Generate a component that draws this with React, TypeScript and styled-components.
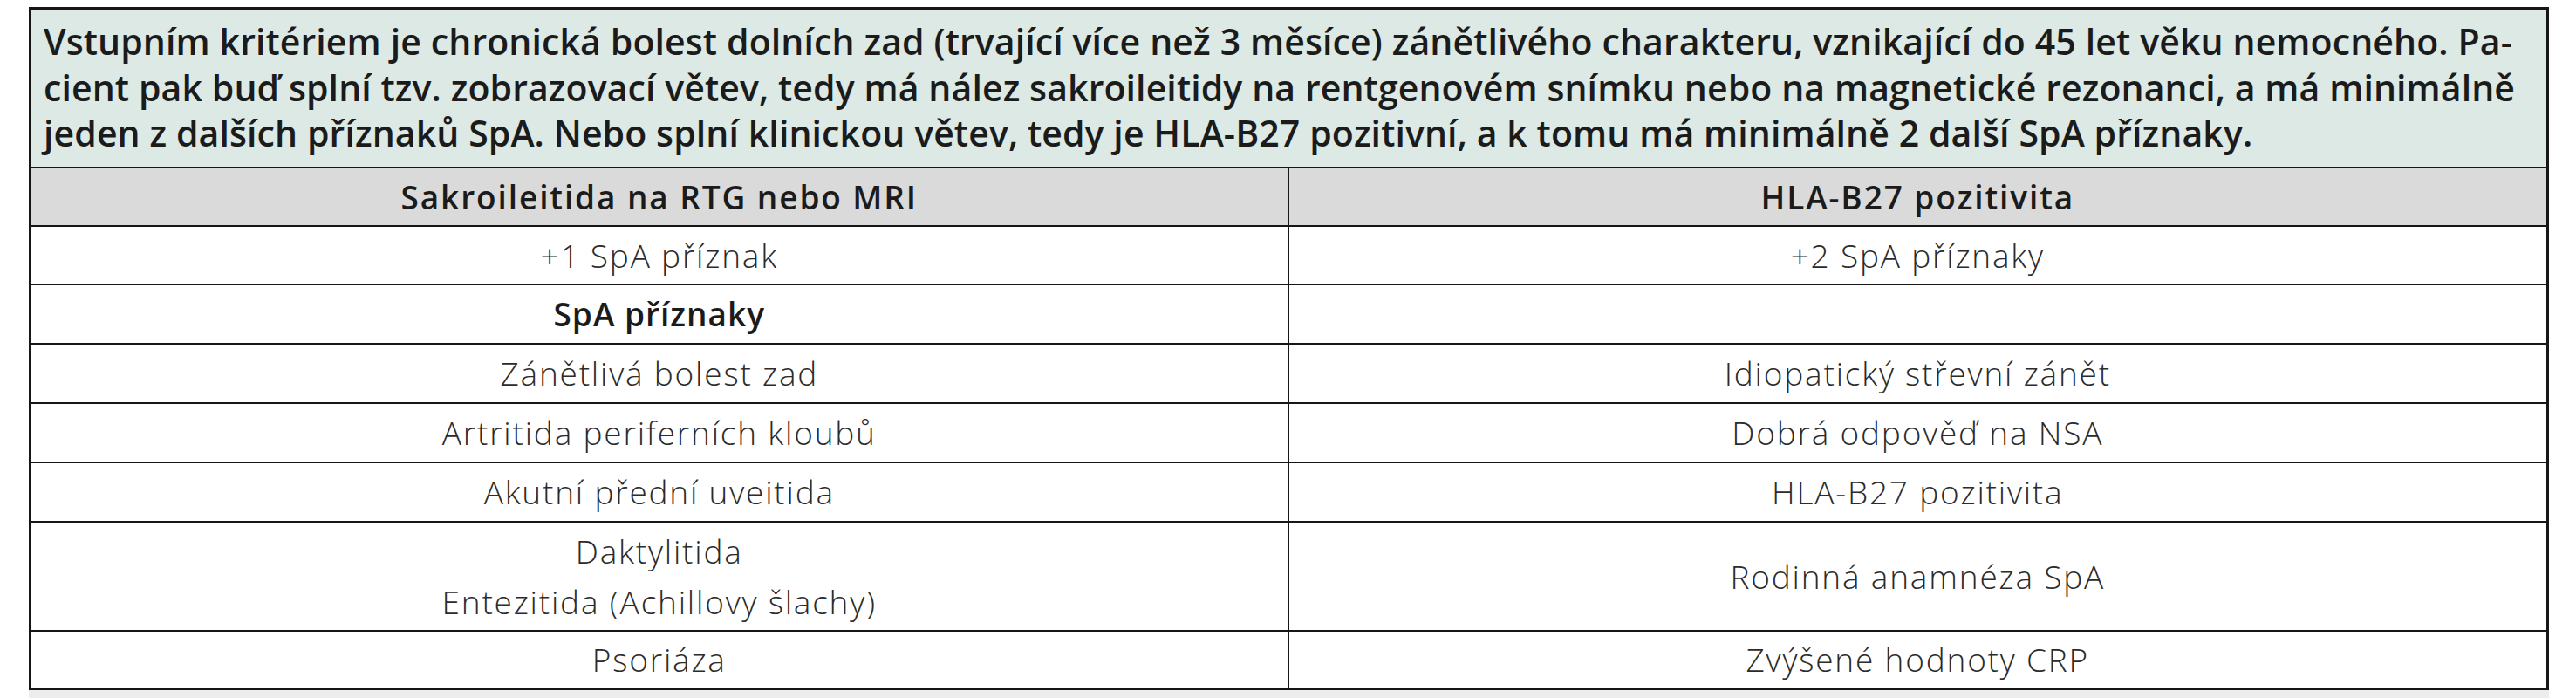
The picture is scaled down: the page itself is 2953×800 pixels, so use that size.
import React from "react";
import styled, { createGlobalStyle } from "styled-components";

const GlobalStyle = createGlobalStyle`
  html, body {
    margin: 0;
    padding: 0;
    background: #ffffff;
  }
  body {
    font-family: "Open Sans", "Noto Sans", "DejaVu Sans", sans-serif;
    color: #222222;
  }
`;

const Page = styled.div`
  width: 2953px;
  height: 800px;
  box-sizing: border-box;
  padding: 8px 31px 0 33px;
  overflow: hidden;
`;

const Table = styled.div`
  display: flex;
  flex-direction: column;
  border: 3px solid #161616;
  box-sizing: border-box;
  width: 2889px;
`;

/* green intro box over both columns */
const Intro = styled.div`
  height: 182px;
  box-sizing: border-box;
  background: #dce9e5;
  border-bottom: 2px solid #161616;
  padding: 10px 39px 0 14px;
  font-weight: 600;
  font-size: 41px;
  letter-spacing: 0.1px;
  line-height: 52.5px;
  color: #1b1b1b;
`;

const Line = styled.div<{ $justify?: boolean }>`
  white-space: nowrap;
  text-align: ${(p) => (p.$justify ? "justify" : "left")};
  text-align-last: ${(p) => (p.$justify ? "justify" : "left")};
`;

const Row = styled.div<{ $height: number; $head?: boolean; $last?: boolean }>`
  display: grid;
  grid-template-columns: 1fr 1fr;
  height: ${(p) => p.$height}px;
  box-sizing: border-box;
  background: ${(p) => (p.$head ? "#dadada" : "#ffffff")};
  border-bottom: ${(p) => (p.$last ? "none" : "2px solid #161616")};
`;

const Cell = styled.div<{ $bold?: boolean; $head?: boolean }>`
  display: flex;
  flex-direction: column;
  align-items: center;
  justify-content: center;
  text-align: center;
  font-size: 37px;
  line-height: 58px;
  letter-spacing: ${(p) => (p.$head ? "1.9px" : p.$bold ? "1px" : "1.8px")};
  font-weight: ${(p) => (p.$bold ? 600 : 300)};
  color: ${(p) => (p.$bold ? "#1b1b1b" : "#2b2b2b")};

  &:first-child {
    border-right: 2px solid #161616;
  }
`;

const Shade = styled.div`
  height: 9px;
  background: #ededed;
`;

type RowData = {
  left: React.ReactNode;
  right: React.ReactNode;
  height: number;
  head?: boolean;
  boldLeft?: boolean;
};

const rows: RowData[] = [
  { left: "Sakroileitida na RTG nebo MRI", right: "HLA-B27 pozitivita", height: 67, head: true },
  { left: "+1 SpA příznak", right: "+2 SpA příznaky", height: 67 },
  { left: "SpA příznaky", right: "", height: 68, boldLeft: true },
  { left: "Zánětlivá bolest zad", right: "Idiopatický střevní zánět", height: 68 },
  { left: "Artritida periferních kloubů", right: "Dobrá odpověď na NSA", height: 68 },
  { left: "Akutní přední uveitida", right: "HLA-B27 pozitivita", height: 68 },
  {
    left: (
      <>
        <span>Daktylitida</span>
        <span>Entezitida (Achillovy šlachy)</span>
      </>
    ),
    right: "Rodinná anamnéza SpA",
    height: 125,
  },
  { left: "Psoriáza", right: "Zvýšené hodnoty CRP", height: 64 },
];

const App: React.FC = () => {
  return (
    <>
      <GlobalStyle />
      <Page>
        <Table>
          <Intro>
            <Line $justify>
              Vstupním kritériem je chronická bolest dolních zad (trvající více než 3 měsíce) zánětlivého charakteru, vznikající do 45 let věku nemocného. Pa-
            </Line>
            <Line $justify>
              cient pak buď splní tzv. zobrazovací větev, tedy má nález sakroileitidy na rentgenovém snímku nebo na magnetické rezonanci, a má minimálně
            </Line>
            <Line>
              jeden z dalších příznaků SpA. Nebo splní klinickou větev, tedy je HLA-B27 pozitivní, a k tomu má minimálně 2 další SpA příznaky.
            </Line>
          </Intro>
          {rows.map((r, i) => (
            <Row key={i} $height={r.height} $head={r.head} $last={i === rows.length - 1}>
              <Cell $bold={r.head || r.boldLeft} $head={r.head}>
                {r.left}
              </Cell>
              <Cell $bold={r.head} $head={r.head}>
                {r.right}
              </Cell>
            </Row>
          ))}
        </Table>
        <Shade />
      </Page>
    </>
  );
};

export default App;
